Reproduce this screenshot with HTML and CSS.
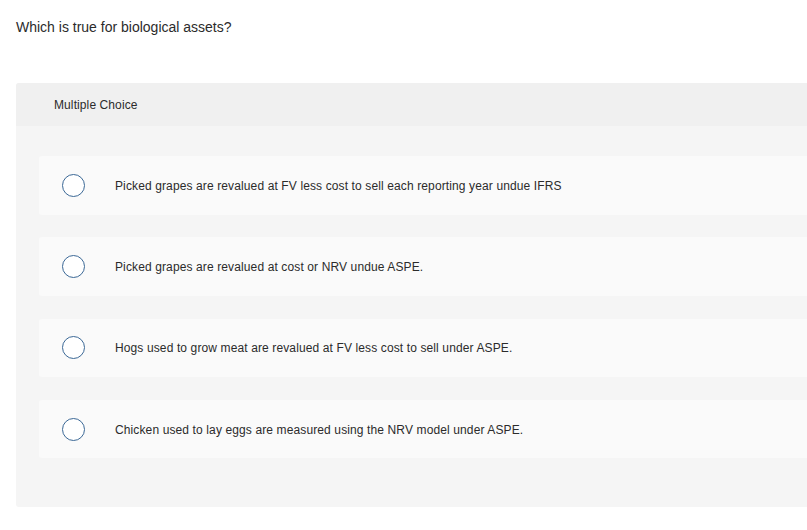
FILE: index.html
```html
<!DOCTYPE html>
<html lang="en">
<head>
  <meta charset="UTF-8">
  <title>Which is true for biological assets?</title>
  <link rel="stylesheet" href="styles.css">
</head>
<body>
  <p class="question">Which is true for biological assets?</p>
  <div class="panel">
    <div class="panel-head">Multiple Choice</div>
    <div class="choices">
      <label class="choice"><span class="radio"></span><span>Picked grapes are revalued at FV less cost to sell each reporting year undue IFRS</span></label>
      <label class="choice"><span class="radio"></span><span>Picked grapes are revalued at cost or NRV undue ASPE.</span></label>
      <label class="choice"><span class="radio"></span><span>Hogs used to grow meat are revalued at FV less cost to sell under ASPE.</span></label>
      <label class="choice"><span class="radio"></span><span>Chicken used to lay eggs are measured using the NRV model under ASPE.</span></label>
    </div>
  </div>
</body>
</html>
```

FILE: styles.css
```css
html, body { overflow: hidden; }
body {
  margin: 0;
  background: #fff;
  color: #2b2b2b;
  font-family: 'Liberation Sans', Arial, sans-serif;
}
.question {
  margin: 0;
  padding: 19px 16px 0;
  height: 64px;
  font-size: 14px;
  line-height: 17px;
}
.panel {
  margin-left: 16px;
  width: 830px;
  background: #f5f5f5;
  border-radius: 3px;
}
.panel-head {
  height: 43px;
  line-height: 44px;
  padding-left: 38px;
  background: #f0f0f0;
  font-size: 12px;
  letter-spacing: 0.1px;
  border-radius: 3px 3px 0 0;
}
.choices {
  padding: 30px 0 49px 23px;
  display: flex;
  flex-direction: column;
  gap: 22.8px;
}
.choice {
  height: 58.5px;
  display: flex;
  align-items: center;
  background: #fafafa;
  border-radius: 3px;
  font-size: 12px;
  letter-spacing: 0.12px;
  cursor: pointer;
}
.choice span:last-child { padding-top: 1px; }
.radio {
  width: 21px;
  height: 21px;
  margin: 0 30px 0 23px;
  border: 1.5px solid #3b6896;
  border-radius: 50%;
  background: #fff;
  flex: none;
}
```
